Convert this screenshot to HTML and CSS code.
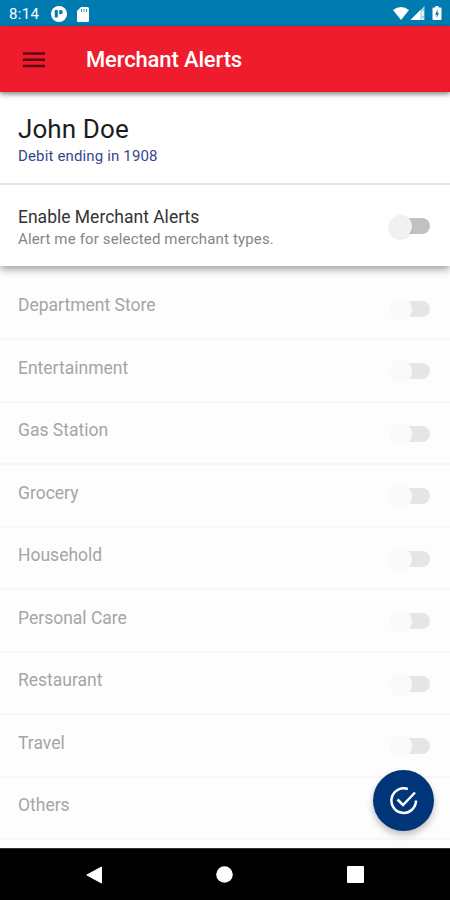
FILE: index.html
```html
<!DOCTYPE html>
<html lang="en">
<head>
<meta charset="utf-8">
<title>Merchant Alerts</title>
<link rel="stylesheet" href="styles.css">
</head>
<body>
<div class="screen">
  <header class="status">
    <span class="clock">8:14</span>
    <svg class="s-app" width="16" height="16" viewBox="0 0 16 16"><circle cx="8" cy="8" r="8" fill="#fff"/><path d="M3.800 4h3v7.500h-3z" fill="#007bb2"/><path d="M8.300 4h1.400a2 2 0 0 1 0 4.200H8.300z" fill="#007bb2"/></svg>
    <svg class="s-sd" width="12" height="15" viewBox="0 0 12 15"><path d="M4 0h6.500A1.500 1.500 0 0 1 12 1.500v12a1.500 1.500 0 0 1-1.500 1.500h-9A1.500 1.500 0 0 1 0 13.500V4z" fill="#fff"/><path d="M4.500 2v3M7 2v3M9.500 2v3" stroke="#007bb2" stroke-width=".8"/></svg>
    <svg class="s-right" width="50" height="16" viewBox="0 0 50 16"><path d="M0 4Q8-2 16 4L8 14z" fill="#fff"/><path d="M31.500 0v14H17.500z" fill="#a6d0e4"/><path d="M27.500 4v10h-10z" fill="#fff"/><path d="M29.700 5v5M29.700 12v2" stroke="#fff" stroke-width="1.600"/><path d="M40.500 1.500h2V0h3v1.500h2a1 1 0 0 1 1 1V13a1 1 0 0 1-1 1h-7a1 1 0 0 1-1-1V2.500a1 1 0 0 1 1-1z" fill="#fff"/><path d="M44.500 3.500L42 8.500h1.600V12L46 7h-1.500z" fill="#007bb2"/></svg>
  </header>
  <div class="appbar">
    <svg width="22" height="16" viewBox="0 0 22 16"><path d="M0 1.500h22M0 7.800h22M0 14.100h22" stroke="#5c070e" stroke-width="2.500"/></svg>
    <h1>Merchant Alerts</h1>
  </div>
  <section class="account">
    <h2>John Doe</h2>
    <p>Debit ending in 1908</p>
  </section>
  <section class="enable">
    <div class="copy">
      <h3>Enable Merchant Alerts</h3>
      <p>Alert me for selected merchant types.</p>
    </div>
    <span class="toggle"></span>
  </section>
  <ul class="types">
    <li><span class="name">Department Store</span><span class="toggle"></span></li>
    <li><span class="name">Entertainment</span><span class="toggle"></span></li>
    <li><span class="name">Gas Station</span><span class="toggle"></span></li>
    <li><span class="name">Grocery</span><span class="toggle"></span></li>
    <li><span class="name">Household</span><span class="toggle"></span></li>
    <li><span class="name">Personal Care</span><span class="toggle"></span></li>
    <li><span class="name">Restaurant</span><span class="toggle"></span></li>
    <li><span class="name">Travel</span><span class="toggle"></span></li>
    <li><span class="name">Others</span></li>
  </ul>
  <div class="fab"><svg width="28" height="28" viewBox="0 0 28 28" fill="none" stroke="#fff" stroke-width="2.500"><path d="M17.800 2A12.300 12.300 0 1 0 26 13.500"/><path d="M7.500 12.500L13 18L25 5.500"/></svg></div>
  <nav class="navbar">
    <svg width="16" height="18" viewBox="0 0 16 18"><path d="M.8 9L15.500 1v16z" fill="#fff" stroke="#fff" stroke-linejoin="round"/></svg>
    <svg width="17" height="17" viewBox="0 0 17 17"><circle cx="8.500" cy="8.500" r="8.300" fill="#fff"/></svg>
    <svg width="17" height="17" viewBox="0 0 17 17"><rect width="17" height="17" rx="1" fill="#fff"/></svg>
  </nav>
</div>
</body>
</html>
```
FILE: styles.css
```css
* { box-sizing: border-box; }
body { margin: 0; font-family: Roboto, sans-serif; }
h1, h2, h3, p, ul { margin: 0; padding: 0; font-weight: 400; }
svg { display: block; flex: none; }
.screen { position: relative; width: 450px; height: 900px; overflow: hidden; background: #fdfdfd; display: flex; flex-direction: column; }
.status { height: 26px; flex: none; background: #007bb2; display: flex; align-items: center; padding: 2px 7px 0 9px; color: #fff; }
.clock { font-size: 15px; width: 42px; line-height: 18px; letter-spacing: .3px; }
.s-sd { margin-left: 10px; }
.s-right { margin-left: auto; }
.appbar { height: 66px; flex: none; background: #ef1c2d; display: flex; align-items: center; padding: 1px 0 0 23px; gap: 41px; box-shadow: 0 2px 5px rgba(0, 0, 0, .5); z-index: 3; }
.appbar h1 { color: #fff; font-size: 22px; font-weight: 500; line-height: 28px; letter-spacing: -.14px; }
.account { height: 93px; flex: none; background: #fff; border-bottom: 2px solid #e4e4e4; padding: 21px 18px 0; z-index: 2; }
.account h2 { font-size: 26px; line-height: 32px; color: #1c1c1c; letter-spacing: .1px; }
.account p { font-size: 15px; line-height: 20px; color: #35478c; margin-top: 1px; letter-spacing: .15px; }
.enable { height: 81px; flex: none; background: #fff; display: flex; align-items: center; padding: 0 20px 0 18px; box-shadow: 0 3px 8px rgba(0, 0, 0, .4); z-index: 1; }
.copy { flex: 1; padding-top: 4px; }
.copy h3 { font-size: 17.5px; line-height: 22px; color: #333; }
.copy p { font-size: 15px; line-height: 22px; color: #858585; letter-spacing: .15px; }
.toggle { position: relative; flex: none; width: 38px; height: 16px; border-radius: 8px; background: #c1c1c1; }
.toggle::before { content: ""; position: absolute; left: -3px; top: -3px; width: 23px; height: 23px; border-radius: 50%; background: #f1f1f1; box-shadow: 0 1px 2px rgba(0, 0, 0, .12); }
.types { list-style: none; padding-top: 11.5px; }
.types li { height: 62.5px; display: flex; align-items: center; justify-content: space-between; padding: 0 20px 0 18px; border-bottom: 2px solid #f7f7f7; }
.name { font-size: 17.5px; line-height: 22px; color: #a5a5a5; padding-bottom: 5px; }
.types .toggle { background: #e5e5e5; top: 1px; }
.types .toggle::before { background: #fafafa; box-shadow: none; }
.fab { position: absolute; left: 373px; top: 770px; width: 61px; height: 61px; border-radius: 50%; background: #01357a; display: flex; align-items: center; justify-content: center; box-shadow: 0 4px 7px rgba(0, 0, 0, .25); z-index: 4; }
.navbar { height: 52px; flex: none; margin-top: auto; background: #000; display: flex; align-items: center; justify-content: space-between; padding: 0 86px; border-top: 1px solid #333; }
```
